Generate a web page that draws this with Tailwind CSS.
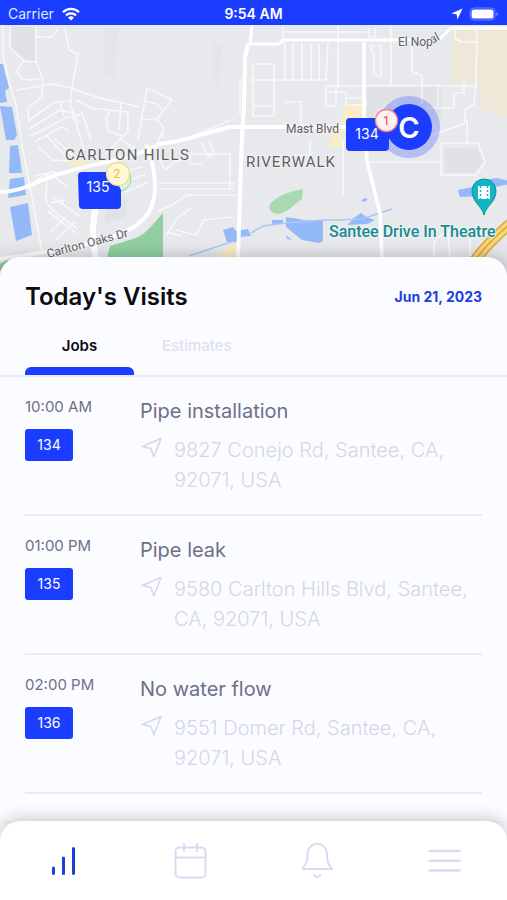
<!DOCTYPE html>
<html lang="en">
<head>
<meta charset="utf-8">
<meta name="viewport" content="width=device-width, initial-scale=1">
<title>Today's Visits</title>
<script src="https://cdn.jsdelivr.net/npm/@tailwindcss/browser@4"></script>
</head>
<body class="flex min-h-screen flex-col bg-[#fbfcff] font-['Inter','Liberation_Sans',sans-serif] text-[#6f6f87]">

<header class="grid grid-cols-3 items-center bg-[#1b3dff] px-2 pt-1 pb-px text-sm leading-5 text-white">
  <div class="flex items-center gap-2">
    <span class="text-[#dfe5ff]">Carrier</span>
    <svg class="h-3.5 w-4.5" viewBox="0 0 18 14" fill="none" stroke="#fff" stroke-width="2.3" aria-hidden="true"><path d="M1 5.2a11.4 11.4 0 0 1 16 0M4 8.4a7.1 7.1 0 0 1 10 0"/><path d="M9 13.6 6.1 10.7a4.1 4.1 0 0 1 5.8 0z" fill="#fff" stroke="none"/></svg>
  </div>
  <span class="text-center font-semibold">9:54 AM</span>
  <div class="flex items-center justify-end gap-1.5">
    <svg class="size-3" viewBox="0 0 12 12" fill="#fff" aria-hidden="true"><path d="M11.6.4.3 5.6l5.3.7.8 5.3z"/></svg>
    <svg class="h-3.5 w-7.5" viewBox="0 0 30 14" aria-hidden="true"><rect x="1" y="1" width="25" height="12" rx="4" fill="none" stroke="#6f83ff"/><rect x="2.5" y="2.5" width="22" height="9" rx="2.5" fill="#fff"/><path d="M27.5 5v4q1.500-.5 1.500-2t-1.500-2" fill="#8c9dff"/></svg>
  </div>
</header>

<section aria-label="Map of visits" class="overflow-hidden bg-[#e8e9ec]">
  <svg class="block h-[250px] w-full" viewBox="0 25 507 250" preserveAspectRatio="xMidYMin slice" font-family="Roboto, 'Liberation Sans', sans-serif">
    <defs><linearGradient id="shade" x1="0" y1="0" x2="0" y2="1"><stop offset="0" stop-color="#000" stop-opacity="0"/><stop offset="1" stop-color="#000" stop-opacity=".1"/></linearGradient></defs>
    <rect y="25" width="507" height="250" fill="#e8e9ec"/>
    <g fill="#e1e2e6">
      <path d="M11 27h24v35l-10-2-14-12zM366 86h76v35h-76zM105 205l22-7v18l-22 8zM445 148h32l6 15-9 10h-29z"/>
      <path d="M104 28h14l-4 50-9-3zM213 42l9 6-4 40-5-8z" fill="#e4e5e8"/>
    </g>
    <!-- parks and commercial land -->
    <path d="M452 30l55-3v91l-28-9 0-27h-27z" fill="#efe8d9"/>
    <path d="M345 105l19-1v30h-22v13h-12v-16l11-8zM70 157h16l1 8-18 2zM222 252l15-11v17h-20z" fill="#f9edc8"/>
    <path d="M107 258l3-12 26-8c10-4 17-14 27-25v45zM0 264l14-8v14H0z" fill="#91cfa2"/>
    <path d="M303 189l-1 10c-9 6-14 14-24 15-8-1-11-7-7-11 9-9 18-11 32-14z" fill="#a8dab2"/>
    <!-- water -->
    <g fill="#94b9f9">
      <path d="M0 64h3l6 24-4 3 2 11-7 1zM0 106l12 1 5 28-3 5H6zM10 146l8-1 4 28H9zM10 179l14-2 2 18-18 3zM10 207l18-4 4 32-16 6z"/>
      <path d="M223 230l10-3 3 4 12-2 3 7-11 1v5h-13zM272 220h11v4h-11zM286 217l18 3 19 1v20l-4 2-17-3-16-13zM286 235l6 5-5-1zM347 225l7-7 7-5 5 4 9 3-8 4zM361 200l5-2 2 2-5 2zM458 190l14-3 4-6 21-3 12 3v3l-18 4-9 8-22 1z"/>
    </g>
    <path d="M189 256l45-15M251 233l12-7 23-3 36-3h16l24-1 30-10" fill="none" stroke="#acc7f5" stroke-width="1.500"/>
    <!-- minor streets -->
    <g fill="none" stroke="#fff" stroke-opacity=".68" stroke-width="1.600" stroke-linejoin="round">
      <path d="M3 26v28l5 24 8 27 6 40 9 47 11 60M10 27v20l14 14 12 1 5 11 2 8-1 15-14 13 1 14M36 27v36M24 61l-7 9 4 9 8 1 14-2M36 37h16l6-8M65 28l4 22 9 4-6 35-2 14 8 27 6 20M16 90l38-6 16 4 30 10 40 9M28 121l27-19 17-1M29 129l31-19 16 4M31 136l38-20 10 5M34 142l28-15 8 4M60 102l4 14M76 100l16 8 36 4v20l-8 7M72 119l10-6 9 26M110 110l-4 9 2 12 15 5M121 103l-2 27M138 140l9-52 25 12-15 19 6 8v12M143 101l14 3 7 8M140 119l17 1M197 134l34-14"/>
      <path d="M38 146l14 14 17 1M46 135l20 22M55 139l18 17M34 182l14-9 20 14M47 173l-1 30 10 10 22 16M34 176l18-4 14 3M53 197l26 19M48 211l28 22M50 232l16-15M55 240l20-18M65 200l-14 3M97 211l-3 25M122 172l20-5M123 182l23-8M125 192l22-9M105 155l15-16 18 12M163 130l-8 18M158 155l7 15 10-8 15-4M158 183h77M158 189h76M190 154h40v35M190 154v10h12M202 142l6 15 6-3-5-15M158 211l14-6 15-10h50M167 235l10-17 14-10M176 230l20 5 8-15 28-3M166 232l16 4"/>
      <path d="M252 28l-2 13M283 27v12l-4 4M338 26v62M250 80h76l2-37M285 32h80M285 42v37M293 43v37M302 43v37M311 43v37M319 43v37M253 64h21v52h-21zM253 106h21M285 102h16v23l-3 11M326 86h10v20h-10zM326 92h20v14M346 98h20v7h-20M369 28v9h6V28M370 46l4 9v19l7 3V46zM391 26v60M412 43v28l10 5v28M338 86h139M438 84v22M477 28l-1 56-2 20-8 5-2 15-32 11M455 28v10l6 4h16M464 83v10h-10v15h-28M366 162h76M441 143v32h35l9-13-7-19zM343 140v55M240 78v37M310 141v14l-15 1M467 120v25M434 256v-14l13-12h35M448 230l2 28M470 234v22"/>
    </g>
    <!-- main roads -->
    <g fill="none" stroke="#fff" stroke-linejoin="round">
      <path d="M0 192c18 0 30-7 48-14 38-15 76-15 112-34 27-3 48-12 70-17h136" stroke-width="4"/>
      <path d="M248 44l-3 14-1 48-2 30-4 122" stroke-width="4"/>
      <path d="M252 25l-2 19h28l6-4h112l43 0 12-12h56" stroke-width="3"/>
      <path d="M364 42v73l3 46 13 52 2 46" stroke-width="3.500"/>
      <path d="M146 145c6 12 8 26 9 37 1 14-2 22-6 30-10 16-28 22-49 29l-40 9-60 9" stroke-width="4"/>
      <path d="M96 205c-3 18-5 27 0 55" stroke-width="6"/>
    </g>
    <g fill="none">
      <path d="M474 262c9-14 21-25 36-38" stroke="#dca73b" stroke-width="11"/>
      <path d="M474 262c9-14 21-25 36-38" stroke="#f8d77d" stroke-width="8"/>
      <path d="M474 262c9-14 21-25 36-38" stroke="#dca73b" stroke-width="1.500"/>
    </g>
    <rect y="238" width="507" height="37" fill="url(#shade)"/>
    <!-- place names -->
    <g fill="#5e6063" stroke="#f1f2f3" stroke-width="2" paint-order="stroke" stroke-linejoin="round">
      <text x="65" y="160" font-size="15" letter-spacing="1.300">CARLTON HILLS</text>
      <text x="246" y="167" font-size="15" letter-spacing="1">RIVERWALK</text>
      <text x="286" y="133" font-size="12">Mast Blvd</text>
      <text font-size="12" transform="translate(432 44) rotate(-28)">al</text>
      <text x="398" y="46" font-size="12">El Nop</text>
      <text font-size="12" transform="translate(48 258) rotate(-15)">Carlton Oaks Dr</text>
    </g>
    <text x="329" y="237" font-size="16" font-weight="500" fill="#188b92" stroke="#eef2f3" stroke-width="2" paint-order="stroke" stroke-linejoin="round">Santee Drive In Theatre</text>
    <!-- theatre pin -->
    <path d="M484 215c-2-9-12-13-12-24a12 12 0 0 1 24 0c0 11-10 15-12 24z" fill="#12b5c3" stroke="#0b929e"/>
    <rect x="478" y="186" width="12" height="13" fill="#fff"/>
    <path d="M480.500 186v13M487.500 186v13" stroke="#12b5c3" stroke-width="1.500" stroke-dasharray="2 2"/>
    <!-- job pins -->
    <g font-family="Inter, 'Liberation Sans', sans-serif" text-anchor="middle" fill="#fff">
      <circle cx="409" cy="127" r="31" fill="#1b3dff" fill-opacity=".25"/>
      <rect x="346" y="118" width="43" height="33" rx="4" fill="#1b3dff"/>
      <text x="367" y="139" font-size="14">134</text>
      <circle cx="409" cy="127" r="23" fill="#1b3dff"/>
      <text x="409" y="138" font-size="29" font-weight="600">C</text>
      <circle cx="386.500" cy="120.500" r="11" fill="#fff0f1" stroke="#f4848c" stroke-width="1.300"/>
      <text x="386" y="125" font-size="12" fill="#f23f4c">1</text>
      <circle cx="119" cy="179" r="12" fill="#d8f5e2" stroke="#8fd7aa"/>
      <path d="M82 172h30l9 18v15q0 4-4 4H83q-4 0-4-4l-1-29q0-4 4-4z" fill="#1b3dff"/>
      <text x="98" y="192" font-size="14">135</text>
      <circle cx="118" cy="174" r="11.500" fill="#fff7d5" stroke="#f6d98a" stroke-width="1.300"/>
      <text x="117" y="178" font-size="12" fill="#eebb3b">2</text>
    </g>
  </svg>
</section>

<main class="relative -mt-[18px] flex-1 rounded-t-[20px] bg-[#fbfcff] pb-6 shadow-[0_-2px_10px_rgba(0,0,0,0.12)]">
  <div class="flex items-center justify-between px-[25px] pt-6">
    <h1 class="text-2xl leading-8 font-semibold text-[#0b0b10]">Today's Visits</h1>
    <time datetime="2023-06-21" class="text-sm font-bold text-[#1d3fdd]">Jun 21, 2023</time>
  </div>
  <div role="tablist" class="mt-4 flex border-b-2 border-[#ebecf1] px-[25px] text-[15px] leading-5">
    <button type="button" role="tab" aria-selected="true" class="relative w-[109px] pt-[7px] pb-[19px] font-semibold text-[#0b0b10]">Jobs<span class="absolute inset-x-0 bottom-0 h-2 rounded-t-md bg-[#1b3dff]"></span></button>
    <button type="button" role="tab" aria-selected="false" class="px-7 pt-[7px] pb-[19px] font-medium text-[#dfe0f1]">Estimates</button>
  </div>

  <ul class="px-[25px]">
    <li class="flex border-b-2 border-[#ebecf1] pt-5 pb-[19px]">
      <div class="w-[115px] shrink-0">
        <p class="text-[15px] leading-5">10:00 AM</p>
        <a href="#job-134" class="mt-3 flex h-8 w-12 items-center justify-center rounded-[3px] bg-[#1b3dff] text-sm text-white">134</a>
      </div>
      <div class="flex-1">
        <h2 class="text-xl leading-7">Pipe installation</h2>
        <p class="mt-2.5 flex gap-3 text-xl leading-[30px] font-light text-[#d5d6ea]"><svg class="mt-0.5 size-[22px] shrink-0" viewBox="0 0 22 22" fill="none" stroke="#d5d6ea" stroke-width="1.500" stroke-linejoin="round" aria-hidden="true"><path d="M21 1.500 2.500 9.500l8.500 2 2.800 8.500z"/></svg><span>9827 Conejo Rd, Santee, CA, 92071, USA</span></p>
      </div>
    </li>
    <li class="flex border-b-2 border-[#ebecf1] pt-5 pb-[19px]">
      <div class="w-[115px] shrink-0">
        <p class="text-[15px] leading-5">01:00 PM</p>
        <a href="#job-135" class="mt-3 flex h-8 w-12 items-center justify-center rounded-[3px] bg-[#1b3dff] text-sm text-white">135</a>
      </div>
      <div class="flex-1">
        <h2 class="text-xl leading-7">Pipe leak</h2>
        <p class="mt-2.5 flex gap-3 text-xl leading-[30px] font-light text-[#d5d6ea]"><svg class="mt-0.5 size-[22px] shrink-0" viewBox="0 0 22 22" fill="none" stroke="#d5d6ea" stroke-width="1.500" stroke-linejoin="round" aria-hidden="true"><path d="M21 1.500 2.500 9.500l8.500 2 2.800 8.500z"/></svg><span>9580 Carlton Hills Blvd, Santee, CA, 92071, USA</span></p>
      </div>
    </li>
    <li class="flex border-b-2 border-[#ebecf1] pt-5 pb-[19px]">
      <div class="w-[115px] shrink-0">
        <p class="text-[15px] leading-5">02:00 PM</p>
        <a href="#job-136" class="mt-3 flex h-8 w-12 items-center justify-center rounded-[3px] bg-[#1b3dff] text-sm text-white">136</a>
      </div>
      <div class="flex-1">
        <h2 class="text-xl leading-7">No water flow</h2>
        <p class="mt-2.5 flex gap-3 text-xl leading-[30px] font-light text-[#d5d6ea]"><svg class="mt-0.5 size-[22px] shrink-0" viewBox="0 0 22 22" fill="none" stroke="#d5d6ea" stroke-width="1.500" stroke-linejoin="round" aria-hidden="true"><path d="M21 1.500 2.500 9.500l8.500 2 2.800 8.500z"/></svg><span>9551 Domer Rd, Santee, CA, 92071, USA</span></p>
      </div>
    </li>
  </ul>
</main>

<nav aria-label="Main" class="relative grid grid-cols-4 justify-items-center rounded-t-[20px] bg-white pt-5 pb-[19px] shadow-[0_-3px_16px_rgba(0,0,0,0.2)]">
  <a href="#dashboard" aria-label="Dashboard" aria-current="page"><svg class="size-10" viewBox="0 0 40 40" fill="none" stroke="#1c3fd6" stroke-width="3" stroke-linecap="round"><path d="M10.500 27v5.500M20.500 17v15.500M30.500 7.500v25"/></svg></a>
  <a href="#calendar" aria-label="Calendar"><svg class="size-10" viewBox="0 0 40 40" fill="none" stroke="#dadbf1" stroke-width="2" stroke-linecap="round"><rect x="5.500" y="6.500" width="30" height="30" rx="4"/><path d="M5.500 16.500h30M14 3v7M27 3v7"/></svg></a>
  <a href="#alerts" aria-label="Notifications"><svg class="size-10" viewBox="0 0 40 40" fill="none" stroke="#dadbf1" stroke-width="2" stroke-linecap="round" stroke-linejoin="round"><path d="M5.500 28c4-6 5-8 5-15.500a9.700 9.700 0 0 1 19.400 0c0 7.500 1 9.500 5 15.500zM17 34q3.200 4 6.400 0"/></svg></a>
  <a href="#menu" aria-label="Menu"><svg class="size-10" viewBox="0 0 40 40" fill="none" stroke="#dadbf1" stroke-width="2.500" stroke-linecap="round"><path d="M5.500 10h30M5.500 19.700h30M5.500 29.500h30"/></svg></a>
</nav>
</body>
</html>
